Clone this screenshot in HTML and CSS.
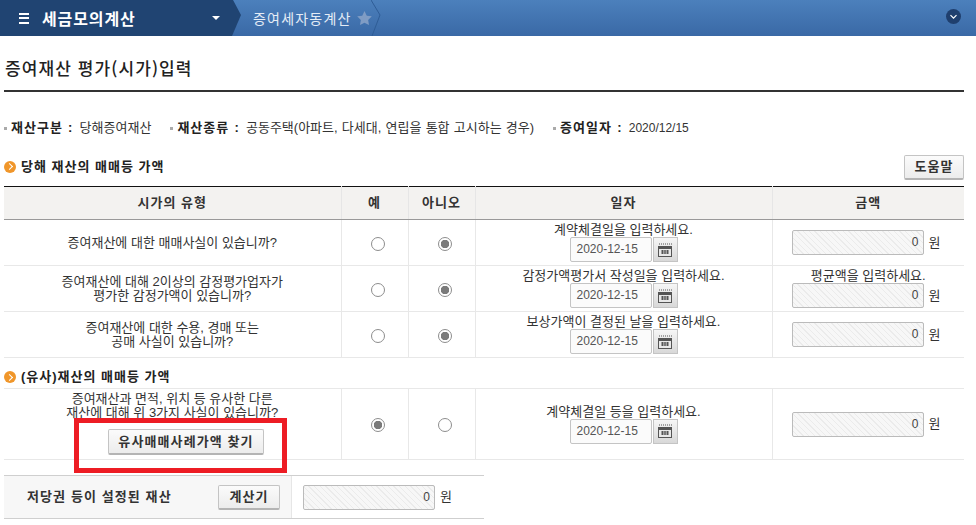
FILE: index.html
```html
<!DOCTYPE html>
<html lang="ko">
<head>
<meta charset="utf-8">
<title>증여재산 평가(시가)입력</title>
<link rel="stylesheet" href="styles.css">
</head>
<body>
<header class="topbar">
  <div class="menu">
    <span class="burger"><i></i><i></i><i></i></span>
    <span class="menu-title">세금모의계산</span>
    <span class="caret"></span>
  </div>
  <div class="crumb">증여세자동계산</div>
  <svg class="star" width="15" height="14" viewBox="0 0 24 23"><path d="M12 0l3.700 7.600 8.300 1.200-6 5.900 1.400 8.300-7.400-3.900-7.400 3.900 1.400-8.300-6-5.900 8.300-1.200z" fill="#7f9cc4"/></svg>
  <svg class="tip2" width="12" height="36" viewBox="0 0 12 36"><path d="M0 0L9 15L1 36" fill="none" stroke="#2f5d96" stroke-width="1"/></svg>
  <span class="round"><svg width="15" height="15" viewBox="0 0 15 15"><circle cx="7.500" cy="7.500" r="7.500" fill="#1f3f6e"/><path d="M4.500 6.200l3 3 3-3" fill="none" stroke="#fff" stroke-width="1.200"/></svg></span>
</header>
<main class="page">
  <h1 class="title">증여재산 평가(시가)입력</h1>
  <p class="meta">
    <span class="meta-item"><b>재산구분 :</b> 당해증여재산</span>
    <span class="meta-item"><b>재산종류 :</b> 공동주택(아파트, 다세대, 연립을 통합 고시하는 경우)</span>
    <span class="meta-item"><b>증여일자 :</b> <span class="num">2020/12/15</span></span>
  </p>
  <div class="section-row">
    <h2 class="section"><span class="bullet"></span>당해 재산의 매매등 가액</h2>
    <button class="btn help" type="button">도움말</button>
  </div>
  <table class="grid">
    <colgroup><col class="c1"><col class="c2"><col class="c3"><col class="c4"><col class="c5"></colgroup>
    <thead>
      <tr><th>시가의 유형</th><th>예</th><th>아니오</th><th>일자</th><th>금액</th></tr>
    </thead>
    <tbody>
      <tr>
        <td>증여재산에 대한 매매사실이 있습니까?</td>
        <td><input class="radio" type="radio" name="a"></td>
        <td><input class="radio" type="radio" name="a" checked></td>
        <td><div class="hint">계약체결일을 입력하세요.</div><div class="date"><span class="date-field">2020-12-15</span><span class="cal"><svg width="14" height="14" viewBox="0 0 14 14"><use href="#cal"/></svg></span></div></td>
        <td><div class="amount"><span class="amount-field">0</span><span class="won">원</span></div></td>
      </tr>
      <tr>
        <td>증여재산에 대해 2이상의 감정평가업자가<br>평가한 감정가액이 있습니까?</td>
        <td><input class="radio" type="radio" name="b"></td>
        <td><input class="radio" type="radio" name="b" checked></td>
        <td><div class="hint">감정가액평가서 작성일을 입력하세요.</div><div class="date"><span class="date-field">2020-12-15</span><span class="cal"><svg width="14" height="14" viewBox="0 0 14 14"><use href="#cal"/></svg></span></div></td>
        <td><div class="hint">평균액을 입력하세요.</div><div class="amount"><span class="amount-field">0</span><span class="won">원</span></div></td>
      </tr>
      <tr>
        <td>증여재산에 대한 수용, 경매 또는<br>공매 사실이 있습니까?</td>
        <td><input class="radio" type="radio" name="c"></td>
        <td><input class="radio" type="radio" name="c" checked></td>
        <td><div class="hint">보상가액이 결정된 날을 입력하세요.</div><div class="date"><span class="date-field">2020-12-15</span><span class="cal"><svg width="14" height="14" viewBox="0 0 14 14"><use href="#cal"/></svg></span></div></td>
        <td><div class="amount"><span class="amount-field">0</span><span class="won">원</span></div></td>
      </tr>
    </tbody>
  </table>
  <h2 class="section second"><span class="bullet"></span>(유사)재산의 매매등 가액</h2>
  <table class="grid plain">
    <colgroup><col class="c1"><col class="c2"><col class="c3"><col class="c4"><col class="c5"></colgroup>
    <tbody>
      <tr>
        <td class="similar">증여재산과 면적, 위치 등 유사한 다른<br>재산에 대해 위 3가지 사실이 있습니까?<button class="btn find" type="button">유사매매사례가액 찾기</button></td>
        <td><input class="radio" type="radio" name="d" checked></td>
        <td><input class="radio" type="radio" name="d"></td>
        <td><div class="hint">계약체결일 등을 입력하세요.</div><div class="date"><span class="date-field">2020-12-15</span><span class="cal"><svg width="14" height="14" viewBox="0 0 14 14"><use href="#cal"/></svg></span></div></td>
        <td><div class="amount"><span class="amount-field">0</span><span class="won">원</span></div></td>
      </tr>
    </tbody>
  </table>
  <div class="lien">
    <div class="lien-label"><b>저당권 등이 설정된 재산</b><button class="btn calc" type="button">계산기</button></div>
    <div class="lien-value"><span class="amount-field">0</span><span class="won">원</span></div>
  </div>
  <div class="redbox"></div>
</main>
<svg class="defs" width="0" height="0"><defs><g id="cal"><path d="M1 1h1M3 1h1M5 1h1M7 1h1M9 1h1M11 1h1M13 1h1" stroke="#555" stroke-width="1"/><rect x="0.500" y="3.500" width="13" height="10" fill="#e8e8e8" stroke="#555"/><rect x="0.500" y="3.500" width="13" height="2.500" fill="#555"/><path d="M3 8h8M3 10h8M4.500 7v4M7 7v4M9.500 7v4" stroke="#555" stroke-width="1"/></g></defs></svg>
</body>
</html>
```
FILE: styles.css
```css
* { box-sizing: border-box; }
html, body { margin: 0; padding: 0; background: #fff; overflow: hidden; }
body { font: 13px/14px "Liberation Sans", "Noto Sans CJK KR", sans-serif; color: #333; width: 976px; height: 525px; position: relative; }

.topbar { height: 36px; display: flex; align-items: center; background: linear-gradient(#4c80bc, #3a69a6); color: #fff; position: relative; }
.menu { width: 241px; height: 36px; background: #204472; display: flex; align-items: center; padding-left: 19px; clip-path: polygon(0 0, 233px 0, 241px 15px, 232px 36px, 0 36px); }
.burger { display: flex; flex-direction: column; gap: 2.500px; width: 10px; }
.burger i { height: 2px; background: #fff; display: block; }
.menu-title { font-size: 16px; font-weight: 700; margin-left: 13px; letter-spacing: 0.900px; width: 170px; white-space: nowrap; font-family: "Noto Sans CJK KR", sans-serif; }
.caret { width: 0; height: 0; border: 4px solid transparent; border-top-color: #fff; border-bottom: 0; }
.crumb { font-size: 14px; margin-left: 12px; color: #e4ecf6; width: 104px; white-space: nowrap; font-family: "Noto Sans CJK KR", sans-serif; letter-spacing: 1.200px; }
.tip2 { margin-left: -1px; }
.round { margin-left: auto; margin-right: 15px; display: flex; margin-top: -3px; }

.page { margin-left: 4px; width: 960px; }
.title { font-size: 17px; line-height: 20px; font-weight: 500; color: #222; margin: 0; padding: 22px 0 12px 1px; border-bottom: 2px solid #333; height: 56px; letter-spacing: 1.100px; font-family: "Noto Sans CJK KR", sans-serif; }
.meta { margin: 29px 0 0; height: 14px; display: flex; white-space: nowrap; word-spacing: 0.600px; }
.meta-item { display: block; padding-left: 7px; margin-right: 19px; position: relative; }
.meta-item::before { content: ""; position: absolute; left: 0; top: 6px; width: 3px; height: 3px; background: #aaa; }
.meta b { color: #222; margin-right: 2px; letter-spacing: 1px; }
.num { font-size: 12px; }

.section-row { display: flex; justify-content: space-between; align-items: center; margin-top: 20px; height: 25px; }
.section-row .section { margin-bottom: 2px; }
.section { margin: 0; font-size: 13px; line-height: 14px; font-weight: 700; color: #222; display: flex; align-items: center; letter-spacing: 1px; }
.bullet { width: 12px; height: 12px; border-radius: 50%; background: #f0962a; margin-right: 5px; position: relative; flex: none; }
.bullet::after { content: ""; position: absolute; left: 2.500px; top: 3.500px; width: 4px; height: 4px; border: solid #fff; border-width: 1.500px 1.500px 0 0; transform: rotate(45deg); }

.btn { font: 700 13px/14px "Liberation Sans", "Noto Sans CJK KR", sans-serif; color: #333; border: 1px solid #c4c4c4; border-bottom: 2px solid #b4b4b4; border-radius: 2px; background: linear-gradient(#fbfbfb, #ececec); padding: 0; letter-spacing: 1px; }
.help { width: 60px; height: 25px; }

.grid { width: 960px; border-collapse: collapse; table-layout: fixed; margin-top: 6px; border-top: 1px solid #111; }
.c1 { width: 337px; } .c2 { width: 67px; } .c3 { width: 67px; } .c4 { width: 297px; } .c5 { width: 192px; }
.grid th { height: 33px; background: #f3f2f0; border-bottom: 1px solid #999; border-left: 1px solid #e6e6e6; font-weight: 700; color: #333; padding: 0; letter-spacing: 1px; }
.grid td { height: 46px; padding: 0; text-align: center; vertical-align: middle; border-bottom: 1px solid #e8e8e8; border-left: 1px solid #e8e8e8; }
.grid th:first-child, .grid td:first-child { border-left: 0; }
.plain { margin-top: 4px; border-top: 1px solid #e8e8e8; }
.plain td { height: 71px; }
.second { margin-top: 12px; }

.similar { vertical-align: top !important; padding-top: 3px !important; }
.find { display: block; width: 156px; height: 26px; margin: 9px auto 0 104px; letter-spacing: 1.100px; }

.radio { appearance: none; -webkit-appearance: none; width: 14px; height: 14px; margin: 2px 0 0 6px; border: 1px solid #8d8d8d; border-radius: 50%; background: #fff; vertical-align: middle; }
.radio:checked { background: radial-gradient(circle, #7a7a7a 0 4px, #fff 4.500px 6px); }

.hint { line-height: 14px; white-space: nowrap; }
.date { display: flex; justify-content: center; gap: 1px; }
.date-field { width: 82px; height: 25px; border: 1px solid #c4c4c4; border-radius: 2px; background: #fbfbfb; line-height: 23px; color: #555; padding-left: 6px; text-align: left; font-size: 12px; }
.cal { width: 25px; height: 25px; border: 1px solid #c4c4c4; background: linear-gradient(#f6f6f6, #d8d8d8); display: flex; align-items: center; justify-content: center; }
.amount { display: flex; align-items: center; padding-left: 19px; }
.amount-field { display: block; width: 132px; height: 25px; border: 1px solid #bbb; border-radius: 2px; text-align: right; line-height: 23px; padding-right: 4px; color: #444; font-size: 12px; background: repeating-linear-gradient(45deg, #f7f7f7 0 3px, #ebebeb 3px 4px); }
.won { margin-left: 5px; }

.lien { display: flex; width: 480px; height: 44px; margin-top: 15px; border-top: 1px solid #cfcfcf; border-bottom: 1px solid #cfcfcf; }
.lien-label { width: 288px; display: flex; align-items: center; justify-content: space-between; background: #f7f7f7; padding: 0 11px 0 23px; border-right: 1px solid #e6e6e6; }
.lien-label b { color: #333; letter-spacing: 1.100px; }
.calc { width: 62px; height: 25px; }
.lien-value { display: flex; align-items: center; padding-left: 11px; }

.redbox { position: absolute; left: 74px; top: 418px; width: 213px; height: 55px; border: 5px solid #ed1c24; }
.defs { position: absolute; }
```
